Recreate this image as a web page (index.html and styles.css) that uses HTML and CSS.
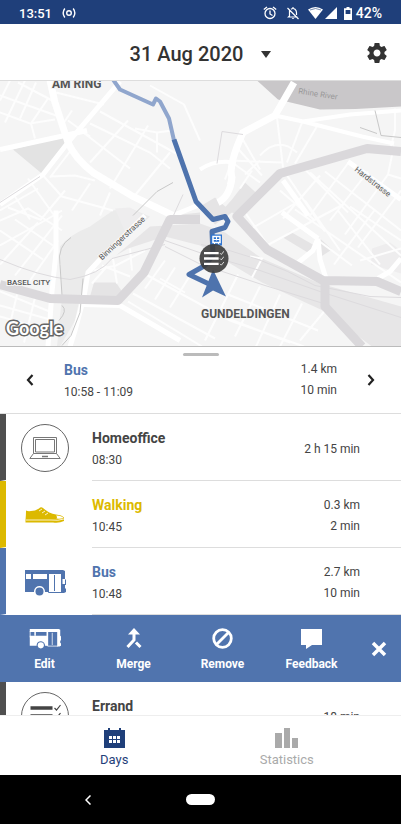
FILE: index.html
```
<!DOCTYPE html>
<html lang="en">
<head>
    <meta charset="UTF-8">
    <meta name="viewport" content="width=device-width, initial-scale=1.0">
    <title>Days</title>
    <link rel="stylesheet" href="styles.css">
</head>
<body>
    <svg class="sprite" aria-hidden="true">
        <symbol id="icon-bus" viewBox="0 0 42 27">
            <path fill="currentColor" d="M1 1H39L41 2V5H1ZM1 10H24V23H21A5.500 5.500 0 0 0 10 22V23H1ZM37 5H41V10L42 11V16H41V19L42 20V23L40 24H37Z"/>
            <path fill="none" stroke="currentColor" d="M1.500 4V12M24.500 4V23.500H38M30.500 6V22"/>
            <path fill="none" stroke="currentColor" stroke-width="2" d="M8 5V10M24 5V23"/>
            <circle cx="15.500" cy="22.500" r="4" fill="currentColor"/>
            <path fill="#fff" d="M38.500 10H41V15H38.500Z"/>
        </symbol>
        <symbol id="icon-list" viewBox="0 0 30 24">
            <path fill="none" stroke="currentColor" stroke-width="3.500" d="M0 4H22M0 12H22M0 20H22"/>
            <path fill="none" stroke="currentColor" stroke-width="1.200" d="M24 4L26 6L30 1M24 12L26 14L30 9M24 20L26 22L30 17"/>
        </symbol>
    </svg>

    <div class="status-bar">
        <span class="clock">13:51</span>
        <svg class="cast" width="14" height="12" viewBox="0 0 14 12" fill="none" stroke="currentColor" stroke-width="1.400">
            <circle cx="7" cy="6" r="2.300"/>
            <path d="M2.800 1.500Q-.5 6 2.800 10.500M11.200 1.500Q14.500 6 11.200 10.500"/>
        </svg>
        <svg class="alarm" width="14" height="14" viewBox="0 0 14 14" fill="none" stroke="currentColor" stroke-width="1.300">
            <circle cx="7" cy="7.500" r="5"/>
            <path d="M7 4.500V8L9.500 9.500M.8 3.600L4 1M13.200 3.600L10 1"/>
        </svg>
        <svg class="silent" width="14" height="14" viewBox="0 0 14 14" fill="none" stroke="currentColor" stroke-width="1.200">
            <path d="M3.500 4.500V10L2.500 11H11.500M5 3.200Q7 1.800 9 3.200Q10.500 4.500 10.500 6.500V9M7 1V2.500M1.500 2L12.500 13"/>
            <path fill="currentColor" stroke="none" d="M5.700 12H8.300Q7 14 5.700 12Z"/>
        </svg>
        <svg class="signal" width="30" height="14" viewBox="0 0 30 14" fill="currentColor">
            <path d="M0 3.500Q7.500-1.500 15 3.500L7.500 13Z"/>
            <path d="M2 4Q7.500 1 13 4" fill="none" stroke="#1f3f7a" stroke-width=".6"/>
            <path d="M17 13H29V1Z"/>
        </svg>
        <svg class="battery" width="8" height="13" viewBox="0 0 8 13">
            <path fill="currentColor" fill-rule="evenodd" d="M2.500 0H5.500V1.300H8V13H0V1.300H2.500ZM1.600 3V7H6.400V3Z"/>
        </svg>
        <span class="percent">42%</span>
    </div>

    <header class="top-bar">
        <button type="button" class="date-picker">
            31 Aug 2020
            <svg width="10" height="7" viewBox="0 0 10 7"><path fill="currentColor" d="M0 0H10L5 7Z"/></svg>
        </button>
        <button type="button" class="settings" aria-label="Settings">
            <svg width="24" height="24" viewBox="0 0 24 24"><path fill="currentColor" d="M19.430 12.980c.04-.32.07-.64.07-.98s-.03-.66-.07-.98l2.110-1.650c.19-.15.24-.42.12-.64l-2-3.460c-.12-.22-.39-.3-.61-.22l-2.490 1c-.52-.4-1.080-.73-1.690-.98l-.38-2.650C14.460 2.180 14.250 2 14 2h-4c-.25 0-.46.18-.49.42l-.38 2.650c-.61.25-1.170.59-1.690.98l-2.490-1c-.23-.09-.49 0-.61.22l-2 3.460c-.13.22-.07.49.12.64l2.110 1.650c-.04.32-.07.65-.07.98s.03.66.07.98l-2.110 1.650c-.19.15-.24.42-.12.64l2 3.460c.12.22.39.3.61.22l2.490-1c.52.4 1.080.73 1.690.98l.38 2.650c.03.24.24.42.49.42h4c.25 0 .46-.18.49-.42l.38-2.650c.61-.25 1.170-.59 1.690-.98l2.490 1c.23.09.49 0 .61-.22l2-3.460c.12-.22.07-.49-.12-.64l-2.110-1.650zM12 15.500c-1.930 0-3.500-1.570-3.500-3.500s1.570-3.500 3.500-3.500 3.500 1.570 3.500 3.500-1.570 3.500-3.500 3.500z"/></svg>
        </button>
    </header>

    <svg class="map" viewBox="0 0 401 266" preserveAspectRatio="xMidYMid slice" role="img" aria-label="Map of the bus trip">
        <rect width="401" height="266" fill="#f5f5f5"/>
        <!-- areas -->
        <path fill="#e3e3e3" d="M13 69L65 56L68 62L43 94Z"/>
        <path fill="#ebebeb" d="M60 166Q70 154 90 146L113 130L131 128L150 136L112 170L88 189L80 216L75 240L60 266H57L62 216Z"/>
        <path fill="#e7e6e7" d="M116 175L150 146L200 143L225 152L262 178L320 203L401 226V266H372L325 231L262 202L200 165L165 156L128 168Z"/>
        <path fill="#e5e4e5" d="M94 202H116L122 211L118 216H90ZM232 119L245 102L258 114L240 136L224 128ZM200 126L215 117L232 132L215 144ZM172 135L200 132V142H172ZM283 157L290 151L318 167L311 174ZM319 157L332 169L318 178Z"/>
        <path fill="#eeedee" d="M372 168L390 162L401 170V193L371 184ZM115 128L130 127L145 136L125 151Z"/>
        <path fill="#c9c7c9" d="M257 0L278 19L320 29Q360 29 401 26V0Z"/>
        <!-- side streets -->
        <g fill="none" stroke="#fdfdfd" stroke-width="2">
            <path d="M0 15L56 35M0 32L30 43L55 39M10 0L0 20M25 0L5 42M36 2L20 38M18 2L56 22M48 18L31 43L35 58M72 30L62 45M56 12L104 24M90 56L68 40M100 31L178 74M90 43L150 72L170 88M82 51L130 88M148 45L110 108M128 40L90 82M170 72L134 116M135 48L157 52L172 50M157 52V72M150 5L184 24L200 60M73 67L50 97M28 98L57 139M43 95L62 116L113 130M50 96L75 95L95 100M0 130L38 108M15 116L30 139M65 110L40 140M90 103L72 130M110 112L100 135M8 127L40 139"/>
            <path d="M0 140L28 128L62 150M0 165L45 140L62 130M0 150L43 179M15 139L53 165M0 184L38 142M15 195L62 135M30 200L58 160M0 225L50 239M0 236L45 249M17 214L8 252M35 217L24 262M0 211L52 232"/>
            <path d="M230 80L282 82M240 54L260 89M277 37L283 87M302 42L287 82M318 44L295 83M242 54L225 99M236 66L262 95M260 75Q278 55 297 72M235 84L260 102M245 94L260 80M240 108L252 90"/>
            <path d="M285 92L325 151M300 84L348 132M320 95L283 138M350 80L310 135M368 91L330 140M388 94L345 154M401 110L358 167M280 110L315 140M325 91L401 150M310 92L401 175M390 70L395 50V28M388 94L394 65M401 98L388 94"/>
            <path d="M243 129L275 175M250 149L300 120M265 166L345 123M286 136L352 185M295 129L401 202M305 120L340 170M338 130L380 184M350 126L401 160M360 180L401 168M375 129L334 184"/>
            <path d="M144 193L230 240L304 266M128 221L202 266M133 213L215 258M165 180L145 208M175 187L155 219M190 195L170 227M160 198L185 212M238 194L205 260M260 206L235 256M280 214L256 266M302 223L280 266M228 214L318 250M220 235L290 262M325 230L300 260M250 176L262 178L252 197M145 170L116 185L94 190M113 178L117 203M102 185L130 196M130 168L132 190M92 203L106 187"/>
        </g>
        <!-- main streets -->
        <g fill="none" stroke="#fff" stroke-width="5">
            <path d="M50 0L55 22L68 62Q75 78 93 92L133 116L173 135" stroke-width="7"/>
            <path d="M120 1L68 62L43 94L0 124M0 69L65 55L87 50"/>
            <path d="M294 2L275 35L243 52Q228 85 232 97Q230 116 218 122" stroke-width="7"/>
            <path d="M275 35L303 41L362 56L394 63M303 41L350 34L401 30M200 89Q215 79 234 82L229 104" stroke-width="4"/>
            <path d="M56 130L56 172L52 211L48 266M145 135L99 180L88 192L84 216M83 220L75 250L70 266M84 224L120 225L180 260M173 135L200 124M283 100L308 135M348 81L401 119M297 183L313 170L318 158M318 158L320 179L326 198M378 198L390 191L401 178M318 158L282 132"/>
        </g>
        <g fill="none" stroke="#dddbde" stroke-width="1">
            <path d="M217 83L222 51L243 54M0 179Q40 196 70 199Q100 194 112 178L165 164M165 160L205 174L260 190L320 211L401 237M165 166L201 184L265 205L330 225M201 164Q260 174 315 205L370 216L401 217M173 136L183 114M0 122L40 96"/>
            <path stroke="#c8c8c8" d="M133 135L157 111L173 102M375 30L381 55L401 57M360 47L377 53M71 157Q57 166 60 184L62 215M62 225Q68 230 59 240M83 198L80 232L71 255L62 265"/>
        </g>
        <!-- ring road -->
        <g fill="none" stroke="#dad8db" stroke-width="9" stroke-linejoin="round">
            <path d="M0 204L50 218L118 220L144 192L170 139H200"/>
            <path d="M401 71L367 68L280 93L237 136L267 169L323 200L377 201L401 211M325 199V226L362 266"/>
        </g>
        <!-- trip -->
        <path fill="none" stroke="#90a6cd" stroke-width="4" stroke-linejoin="round" d="M113 -1L120 9L153 24L156 18L160 21L169 38L174 60"/>
        <path fill="none" stroke="#4e73ad" stroke-width="5" stroke-linejoin="round" d="M174 59L196 121L213 139L225 136L228 141L225 147L212 151L213 175L205 185L189 194L208 203"/>
        <path fill="#4e73ad" d="M213 189L226 216L213 210L202 217Z"/>
        <rect x="211" y="154" width="11" height="11" fill="#2f74d0"/>
        <rect x="213" y="156" width="7" height="6" fill="none" stroke="#fff" stroke-width="1.500"/>
        <path stroke="#fff" d="M213 159H220M216.500 156V160M214 164L215 162M219 164L218 162"/>
        <circle cx="214" cy="178" r="14.500" fill="#3c3c3c" fill-opacity=".9"/>
        <use href="#icon-list" x="204" y="170" width="20" height="16" color="#fff"/>
        <g class="map-labels">
            <text x="52" y="7" class="district">AM RING</text>
            <text x="201" y="237" class="district">GUNDELDINGEN</text>
            <text x="7" y="204" class="city">BASEL CITY</text>
            <text class="street" transform="translate(102 180) rotate(-43)">Binningerstrasse</text>
            <text class="street" transform="translate(354 90) rotate(38)">Hardstrasse</text>
            <text class="river" transform="translate(298 13) rotate(9)">Rhine River</text>
            <text x="6" y="254" class="google">Google</text>
        </g>
    </svg>

    <section class="summary">
        <span class="handle"></span>
        <button type="button" class="arrow" aria-label="Previous trip">
            <svg width="8" height="12" viewBox="0 0 8 12"><path fill="none" stroke="currentColor" stroke-width="2.200" d="M6.500 1L2 6L6.500 11"/></svg>
        </button>
        <div class="info">
            <h2 class="bus-title">Bus</h2>
            <p>10:58 - 11:09</p>
        </div>
        <div class="amount">
            <p>1.4 km</p>
            <p>10 min</p>
        </div>
        <button type="button" class="arrow" aria-label="Next trip">
            <svg width="8" height="12" viewBox="0 0 8 12"><path fill="none" stroke="currentColor" stroke-width="2.200" d="M1.500 1L6 6L1.500 11"/></svg>
        </button>
    </section>

    <main class="timeline">
        <article class="entry stay">
            <div class="symbol">
                <span class="ring">
                    <svg width="32" height="24" viewBox="0 0 32 24" fill="none" stroke="#777">
                        <path d="M4.500 1.500H27.500V17.500H4.500ZM6.500 3.500H25.500V16H6.500ZM4.500 17.500L.8 22.500H31.200L27.500 17.500"/>
                        <path d="M13 20.500H19" stroke-width="1.500"/>
                    </svg>
                </span>
            </div>
            <div class="details">
                <div class="info">
                    <h2>Homeoffice</h2>
                    <p>08:30</p>
                </div>
                <div class="amount"><p>2 h 15 min</p></div>
            </div>
        </article>

        <article class="entry walking">
            <div class="symbol">
                <svg width="40" height="17" viewBox="0 0 40 17">
                    <path fill="currentColor" d="M1 3.500Q3 4.500 6 4Q10 4 14 1.500Q16-.5 18 1Q24 6.500 31 7.500Q37 8 39 10.500V14Q34 16.500 28 15.500H.5V13.500Q1 8 1 3.500Z"/>
                    <path fill="none" stroke="#fff" stroke-width=".8" d="M1 13H26Q33 14 39 12M14 4L17 2M17 6L20 4M20 8L23 6"/>
                    <path fill="#fff" d="M31 8.500Q37 8.500 38.500 11Q35 12 31.500 11.500Q33 10 31 8.500Z"/>
                </svg>
            </div>
            <div class="details">
                <div class="info">
                    <h2>Walking</h2>
                    <p>10:45</p>
                </div>
                <div class="amount"><p>0.3 km</p><p>2 min</p></div>
            </div>
        </article>

        <article class="entry bus">
            <div class="symbol">
                <svg width="42" height="27"><use href="#icon-bus"/></svg>
            </div>
            <div class="details">
                <div class="info">
                    <h2>Bus</h2>
                    <p>10:48</p>
                </div>
                <div class="amount"><p>2.7 km</p><p>10 min</p></div>
            </div>
        </article>

        <div class="actions">
            <button type="button" class="action">
                <svg width="32" height="21"><use href="#icon-bus"/></svg>
                Edit
            </button>
            <button type="button" class="action">
                <svg width="16" height="21" viewBox="0 0 16 21"><path fill="none" stroke="currentColor" stroke-width="3" d="M8 4V12L1.500 19M10 14.500L14.500 19"/><path fill="currentColor" d="M2 6.500L8 0L14 6.500Z"/></svg>
                Merge
            </button>
            <button type="button" class="action">
                <svg width="21" height="21" viewBox="0 0 21 21" fill="none" stroke="currentColor" stroke-width="2.800"><circle cx="10.500" cy="10.500" r="8.800"/><path d="M4.500 16.500L16.500 4.500"/></svg>
                Remove
            </button>
            <button type="button" class="action">
                <svg width="21" height="21" viewBox="0 0 21 21"><path fill="currentColor" d="M0 1H21V17H11L5 21V17H0Z"/></svg>
                Feedback
            </button>
            <button type="button" class="close" aria-label="Close">
                <svg width="16" height="16" viewBox="0 0 16 16"><path stroke="currentColor" stroke-width="3.500" d="M2 2L14 14M14 2L2 14"/></svg>
            </button>
        </div>

        <article class="entry stay">
            <div class="symbol">
                <span class="ring"><svg width="31" height="24"><use href="#icon-list"/></svg></span>
            </div>
            <div class="details">
                <div class="info">
                    <h2>Errand</h2>
                    <p>10:58</p>
                </div>
                <div class="amount"><p>18 min</p></div>
            </div>
        </article>
    </main>

    <nav class="tabs">
        <a href="#days" class="active">
            <svg width="21" height="20" viewBox="0 0 21 20"><path fill="currentColor" d="M0 2H4V0H6V2H15V0H17V2H21V20H0Z"/><path fill="#fff" d="M5 8h3v3h-3zM9 8h3v3h-3zM13 8h3v3h-3zM5 12h3v3h-3zM9 12h3v3h-3zM13 12h3v3h-3z"/></svg>
            Days
        </a>
        <a href="#statistics">
            <svg width="24" height="20" viewBox="0 0 24 20"><path fill="currentColor" d="M0 5H7V20H0ZM9 0H15V20H9ZM17 10H23V20H17Z"/></svg>
            Statistics
        </a>
    </nav>

    <div class="system-bar">
        <button type="button" class="back" aria-label="Back">
            <svg width="6" height="10" viewBox="0 0 6 10"><path fill="none" stroke="currentColor" stroke-width="1.500" d="M5.500 .5L1 5L5.500 9.500"/></svg>
        </button>
        <button type="button" class="home" aria-label="Home"></button>
    </div>
</body>
</html>
```
FILE: styles.css
```
* {
    box-sizing: border-box;
}
body {
    font-family: Roboto, "Liberation Sans", sans-serif;
    font-size: 12px;
    color: #444;
    background-color: #fff;
    display: flex;
    flex-direction: column;
    height: 100vh;
    margin: 0;
    overflow: hidden;
}
h2, p {
    margin: 0;
}
button {
    background: none;
    border: none;
    padding: 0;
    font: inherit;
    color: inherit;
    cursor: pointer;
}
svg {
    display: block;
}
.sprite {
    position: absolute;
    width: 0;
    height: 0;
}

/* status bar */
.status-bar {
    flex: none;
    display: flex;
    align-items: center;
    height: 24px;
    padding: 2px 19px 0 19px;
    background-color: #1f3f7a;
    color: #fff;
    font-size: 13px;
    font-weight: 500;
}
.cast {
    margin-left: 10px;
    margin-right: auto;
}
.silent {
    margin-left: 9px;
}
.signal {
    margin-left: 8px;
}
.battery {
    margin-left: 6px;
}
.percent {
    margin-left: 4px;
    font-size: 14px;
}

/* header */
.top-bar {
    flex: none;
    display: grid;
    grid-template-columns: 48px 1fr 48px;
    align-items: center;
    height: 57px;
    padding-top: 2px;
    border-bottom: 1px solid #ddd;
    color: #333;
}
.date-picker {
    grid-column: 2;
    justify-self: center;
    display: flex;
    align-items: center;
    gap: 18px;
    padding-top: 2px;
    font-size: 20px;
    font-weight: 500;
}
.settings {
    justify-self: center;
}

/* map */
.map {
    flex: none;
    width: 100%;
    height: 266px;
    border-bottom: 1px solid #bbb;
}
.map-labels text {
    font-weight: 500;
    fill: #555;
    stroke: #f5f5f5;
    stroke-width: 2px;
    paint-order: stroke;
}
.map-labels .district {
    font-size: 12px;
    font-weight: 700;
}
.map-labels .city {
    font-size: 8px;
}
.map-labels .street,
.map-labels .river {
    font-size: 8px;
    font-weight: 400;
}
.map-labels .river {
    fill: #999;
    stroke: none;
}
.map-labels .google {
    font-family: Lato, sans-serif;
    font-size: 18px;
    font-weight: 700;
    fill: #fff;
    stroke: #666;
    stroke-width: 3px;
}

/* selected trip */
.summary {
    flex: none;
    position: relative;
    display: flex;
    align-items: center;
    height: 67px;
    border-bottom: 1px solid #ddd;
}
.handle {
    position: absolute;
    top: 6px;
    left: 50%;
    width: 36px;
    height: 3px;
    margin-left: -18px;
    border-radius: 2px;
    background-color: #bbb;
}
.arrow {
    display: flex;
    justify-content: center;
    width: 60px;
    color: #222;
}
.summary .info {
    padding: 2px 0 0 4px;
}
.summary .amount {
    padding-right: 4px;
}
.info {
    flex: 1;
    line-height: 22px;
}
.info h2 {
    font-size: 14px;
    font-weight: 700;
}
.amount {
    line-height: 21px;
    text-align: right;
}

/* timeline */
.timeline {
    flex: 1;
    min-height: 0;
    overflow: hidden;
}
.entry {
    display: flex;
    height: 67px;
}
.symbol {
    display: flex;
    align-items: center;
    width: 92px;
    padding: 2px 0 0 15px;
    border-left: 6px solid #4f4f4f;
    border-bottom: 1px solid #fff;
}
.ring {
    display: flex;
    align-items: center;
    justify-content: center;
    width: 48px;
    height: 48px;
    border: 1px solid #666;
    border-radius: 50%;
}
.details {
    flex: 1;
    display: flex;
    align-items: center;
    padding: 4px 41px 0 0;
    border-bottom: 1px solid #ddd;
}
.walking .symbol {
    padding-left: 19px;
    border-left-color: #dcb900;
    color: #dcb900;
}
.walking h2 {
    color: #dcb900;
}
.bus .symbol {
    padding-left: 18px;
    border-left-color: #5074ae;
    color: #5074ae;
}
.bus h2,
.bus-title {
    color: #5074ae;
}

/* actions */
.actions {
    display: flex;
    height: 67px;
    background-color: #5074ae;
    color: #fff;
}
.action {
    flex: 1;
    display: flex;
    flex-direction: column;
    align-items: center;
    justify-content: center;
    gap: 8px;
    padding-top: 2px;
    font-weight: 700;
}
.close {
    display: flex;
    align-items: center;
    justify-content: center;
    width: 45px;
}

/* bottom tabs */
.tabs {
    flex: none;
    display: flex;
    height: 60px;
    padding: 0 28px;
    border-top: 1px solid #eee;
    font-size: 13px;
}
.tabs a {
    flex: 1;
    display: flex;
    flex-direction: column;
    align-items: center;
    justify-content: center;
    gap: 4px;
    padding-top: 4px;
    color: #aaa;
    text-decoration: none;
}
.tabs .active {
    color: #1f3f7a;
}

/* android navigation */
.system-bar {
    flex: none;
    display: grid;
    grid-template-columns: 1fr 48px 1fr;
    align-items: center;
    justify-items: center;
    height: 49px;
    background-color: #000;
    color: #fff;
}
.home {
    width: 29px;
    height: 11px;
    border-radius: 6px;
    background-color: #fff;
}
```
